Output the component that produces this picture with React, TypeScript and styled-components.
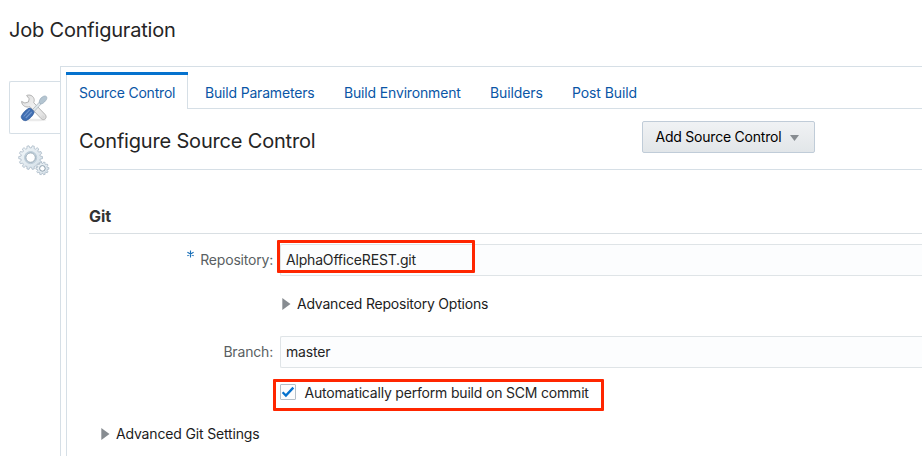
import React from "react";
import styled, { createGlobalStyle } from "styled-components";

const line = "#d6dfe6";

const GlobalStyle = createGlobalStyle`
  * { box-sizing: border-box; }
  body {
    margin: 0;
    background: #fff;
    color: #252525;
    font-family: Inter, "Liberation Sans", sans-serif;
    font-size: 14px;
    line-height: 20px;
    overflow: hidden;
  }
`;

const Page = styled.div`
  width: 922px;
  height: 456px;
  display: flex;
  flex-direction: column;
  overflow: hidden;
  white-space: nowrap;
`;

const Label = styled.span<{ $spacing?: number }>`
  letter-spacing: ${(p) => p.$spacing ?? -0.18}px;
`;

const PageTitle = styled.h1`
  margin: 0;
  padding: 18px 0 0 9px;
  height: 66px;
  font-size: 20px;
  font-weight: 400;
  line-height: 24px;
`;

const Body = styled.div`
  display: flex;
  flex: 1;
`;

const Rail = styled.nav`
  width: 60px;
  padding: 15px 0 0 9px;
`;

const RailTab = styled.div<{ $active?: boolean }>`
  height: 53px;
  display: flex;
  align-items: center;
  justify-content: center;
  padding-right: 2px;
  border: 1px solid ${(p) => (p.$active ? line : "transparent")};
  border-right: 0;
  border-radius: 2px 0 0 2px;
`;

const Panel = styled.main`
  flex: 1;
  display: flex;
  flex-direction: column;
  padding: 5px 0 0 5px;
  border-top: 1px solid ${line};
  border-left: 1px solid ${line};
`;

const Tabs = styled.div`
  display: flex;
  height: 37px;
`;

const Tab = styled.div<{ $width: number }>`
  width: ${(p) => p.$width}px;
  padding: 11px 0 0 17px;
  color: #0a56a6;
  border-bottom: 1px solid ${line};
`;

const ActiveTab = styled(Tab)`
  padding: 0;
  border: 0;
  background: #0572ce;
  display: flex;
  flex-direction: column;
`;

const ActiveTabFace = styled.div`
  flex: 1;
  margin-top: 3px;
  padding: 8px 0 0 12px;
  background: #fff;
  border: solid ${line};
  border-width: 0 1px;
`;

const TabFiller = styled.div`
  flex: 1;
  border-bottom: 1px solid ${line};
`;

const Content = styled.section`
  flex: 1;
  padding-left: 12px;
  border-left: 1px solid ${line};
`;

const Header = styled.header`
  display: flex;
  height: 61px;
  padding-top: 12px;
  border-bottom: 1px solid ${line};
`;

const Heading = styled.h2`
  width: 563px;
  margin: 0;
  padding-top: 8px;
  font-size: 20px;
  font-weight: 400;
  line-height: 24px;
`;

const Button = styled.button`
  width: 173px;
  height: 32px;
  display: flex;
  align-items: center;
  gap: 9px;
  padding: 0 0 0 12.5px;
  color: #000;
  font: inherit;
  background: linear-gradient(#f0f2f4, #e2e6e9);
  border: 1px solid #c0ccd8;
  border-radius: 2px;
`;

const ButtonArrow = styled.svg`
  margin-top: 1px;
`;

const Form = styled.div`
  padding: 34px 0 0 10px;
`;

const GroupTitle = styled.h3`
  height: 30px;
  margin: 0;
  font-size: 16px;
  font-weight: 700;
  line-height: 24px;
  color: #333;
  border-bottom: 1px solid #d9dfe3;
`;

const Row = styled.div<{ $top: number }>`
  display: flex;
  height: 32px;
  margin-top: ${(p) => p.$top}px;
`;

const RowLabel = styled.div`
  width: 191px;
  padding: 6px 7px 0 0;
  display: flex;
  justify-content: flex-end;
  color: #5a5f63;
`;

const Required = styled.svg`
  width: 7px;
  height: 8px;
  margin: 0 6px 0 0;
`;

const Field = styled.div`
  position: relative;
  flex: 1;
  padding: 5px 0 0 5px;
  background: #fcfdfe;
  border: 1px solid #dfe4e7;
  border-right: 0;
  border-radius: 2px 0 0 2px;
`;

const Highlight = styled.div<{ $x: number; $y: number; $w: number; $h: number }>`
  position: absolute;
  left: ${(p) => p.$x}px;
  top: ${(p) => p.$y}px;
  width: ${(p) => p.$w}px;
  height: ${(p) => p.$h}px;
  border: 3px solid #ff2600;
  border-radius: 1px;
`;

const Disclosure = styled.div<{ $left: number; $top: number }>`
  display: flex;
  align-items: center;
  gap: 6px;
  height: 20px;
  margin: ${(p) => p.$top}px 0 0 ${(p) => p.$left}px;
  color: #1c1c1c;
`;

const CheckRow = styled.label`
  position: relative;
  display: flex;
  align-items: center;
  gap: 8.5px;
  height: 20px;
  margin: 15px 0 0 191px;
`;

const CheckBox = styled.span`
  width: 16px;
  height: 16px;
  display: flex;
  margin-bottom: 2px;
  background: #fcfdfe;
  border: 1px solid #b5bfc8;
  border-radius: 1px;
`;

const Arrow = () => (
  <svg width="9" height="12" viewBox="0 0 9 12">
    <path d="M0.3 0 8.5 6 0.3 12Z" fill="#878c91" />
  </svg>
);

const ToolsIcon = () => (
  <svg width="28" height="28" viewBox="0 0 28 28">
    <defs>
      <linearGradient id="steel" x1="0" y1="0" x2="1" y2="1">
        <stop offset="0" stopColor="#dadada" />
        <stop offset=".5" stopColor="#f2f2f2" />
        <stop offset="1" stopColor="#dadada" />
      </linearGradient>
    </defs>
    <ellipse cx="14" cy="26" rx="12.5" ry="1.3" fill="#ebebeb" />
    <path
      d="M1.6 7.4 4.9 9 8.4 8 9.2 4.8 6.6 1.5C9.5.2 13 1.6 14 4.7c.4 1.5.2 2.7-.3 4l11.5 11.9c2.6 3-.8 6.6-3.9 4.2L9.8 12.6c-3.7 1.3-8-.6-8.2-5.2Z"
      fill="url(#steel)"
      stroke="#adadad"
      strokeWidth=".9"
    />
    <circle cx="22.9" cy="22.9" r=".9" fill="#fff" stroke="#b5b5b5" strokeWidth=".5" />
    <path d="m12.6 15.5 6.6-7.2 1.8 1.8-6.6 7.2Z" fill="#dfe6ea" stroke="#98a6b0" strokeWidth=".6" />
    <path d="M19.2 8.3c.3-2.3 1-4 3-5.2 1.3-1.1 3.2-1.6 4.2-.5s.3 3-.8 4.1c-1.4 1.8-2.9 3-5 3.4Z" fill="#b4c5d1" stroke="#8fa3b3" strokeWidth=".6" />
    <path d="M9.2 14.1c1.6-.2 4.9 3 4.9 4.5-1.4 3.4-4.2 6.2-7.6 7.8-2.7 1.2-6.3-2.1-5-4.7 2-3.4 4.3-5.9 7.7-7.6Z" fill="#416fb1" stroke="#2a569b" strokeWidth=".7" />
    <path d="M9.7 15.8 3.6 22.5M11.8 18l-6 6" stroke="#7298cf" strokeWidth="1.1" />
  </svg>
);

const gear = (cx: number, cy: number, r: number, n: number, depth: number) => {
  const points: string[] = [];
  for (let i = 0; i < n; i++) {
    [-0.34, -0.2, 0.2, 0.34].forEach((o, k) => {
      const a = ((i + o) / n) * Math.PI * 2;
      const d = k === 1 || k === 2 ? r : r - depth;
      points.push(`${(cx + Math.cos(a) * d).toFixed(2)},${(cy + Math.sin(a) * d).toFixed(2)}`);
    });
  }
  return points.join(" ");
};

const GearsIcon = () => (
  <svg width="32" height="32" viewBox="0 0 32 32">
    <defs>
      <linearGradient id="gearFace" x1="0" y1="0" x2="1" y2="1">
        <stop offset="0" stopColor="#f4f8fa" />
        <stop offset="1" stopColor="#d2dee7" />
      </linearGradient>
    </defs>
    <g stroke="#a9b9c6" strokeWidth=".8" strokeLinejoin="round" fill="url(#gearFace)">
      <polygon points={gear(12.6, 12.6, 11.9, 14, 2.2)} />
      <circle cx="12.6" cy="12.6" r="6.1" fill="#c6d5e0" stroke="#b6c6d3" />
      <circle cx="12.6" cy="12.6" r="4.7" fill="#fff" stroke="#8b9dab" />
      <polygon points={gear(24.4, 23.4, 6.5, 10, 1.5)} />
      <circle cx="24.4" cy="23.4" r="2.8" fill="#fff" stroke="#8b9dab" strokeWidth="1" />
    </g>
  </svg>
);

export default function App() {
  return (
    <Page>
      <GlobalStyle />
      <PageTitle><Label $spacing={-0.2}>Job Configuration</Label></PageTitle>
      <Body>
        <Rail>
          <RailTab $active><ToolsIcon /></RailTab>
          <RailTab><GearsIcon /></RailTab>
        </Rail>
        <Panel>
          <Tabs>
            <ActiveTab $width={122}>
              <ActiveTabFace><Label $spacing={-0.2}>Source Control</Label></ActiveTabFace>
            </ActiveTab>
            <Tab $width={139}><Label>Build Parameters</Label></Tab>
            <Tab $width={146}><Label $spacing={-0.16}>Build Environment</Label></Tab>
            <Tab $width={82}><Label $spacing={-0.12}>Builders</Label></Tab>
            <Tab $width={100}><Label $spacing={-0.1}>Post Build</Label></Tab>
            <TabFiller />
          </Tabs>
          <Content>
            <Header>
              <Heading><Label $spacing={-0.18}>Configure Source Control</Label></Heading>
              <Button>
                <Label $spacing={-0.22}>Add Source Control</Label>
                <ButtonArrow width="9" height="6" viewBox="0 0 9 6"><path d="M0 0h9L4.5 6Z" fill="#878c91" /></ButtonArrow>
              </Button>
            </Header>
            <Form>
              <GroupTitle><Label $spacing={0}>Git</Label></GroupTitle>
              <Row $top={10}>
                <RowLabel>
                  <Required viewBox="0 0 7 8">
                    <path d="M3.5.5v7M.4 2.2l6.2 3.6M6.6 2.2.4 5.8" stroke="#1b70b8" strokeWidth="1.1" />
                  </Required>
                  <Label $spacing={-0.2}>Repository:</Label>
                </RowLabel>
                <Field>
                  <Label>AlphaOfficeREST.git</Label>
                  <Highlight $x={-4} $y={-5} $w={198} $h={33} />
                </Field>
              </Row>
              <Disclosure $left={193} $top={18}><Arrow /><Label $spacing={-0.22}>Advanced Repository Options</Label></Disclosure>
              <Row $top={22}>
                <RowLabel><Label>Branch:</Label></RowLabel>
                <Field><Label $spacing={-0.15}>master</Label></Field>
              </Row>
              <CheckRow>
                <CheckBox>
                  <svg width="14" height="14" viewBox="0 0 14 14"><path d="m1.6 7.3 3.3 3.3 7.4-8" fill="none" stroke="#0572ce" strokeWidth="2.3" /></svg>
                </CheckBox>
                <Label $spacing={-0.19}>Automatically perform build on SCM commit</Label>
                <Highlight $x={-7} $y={-4} $w={331} $h={32} />
              </CheckRow>
              <Disclosure $left={12} $top={21}><Arrow /><Label $spacing={-0.16}>Advanced Git Settings</Label></Disclosure>
            </Form>
          </Content>
        </Panel>
      </Body>
    </Page>
  );
}
